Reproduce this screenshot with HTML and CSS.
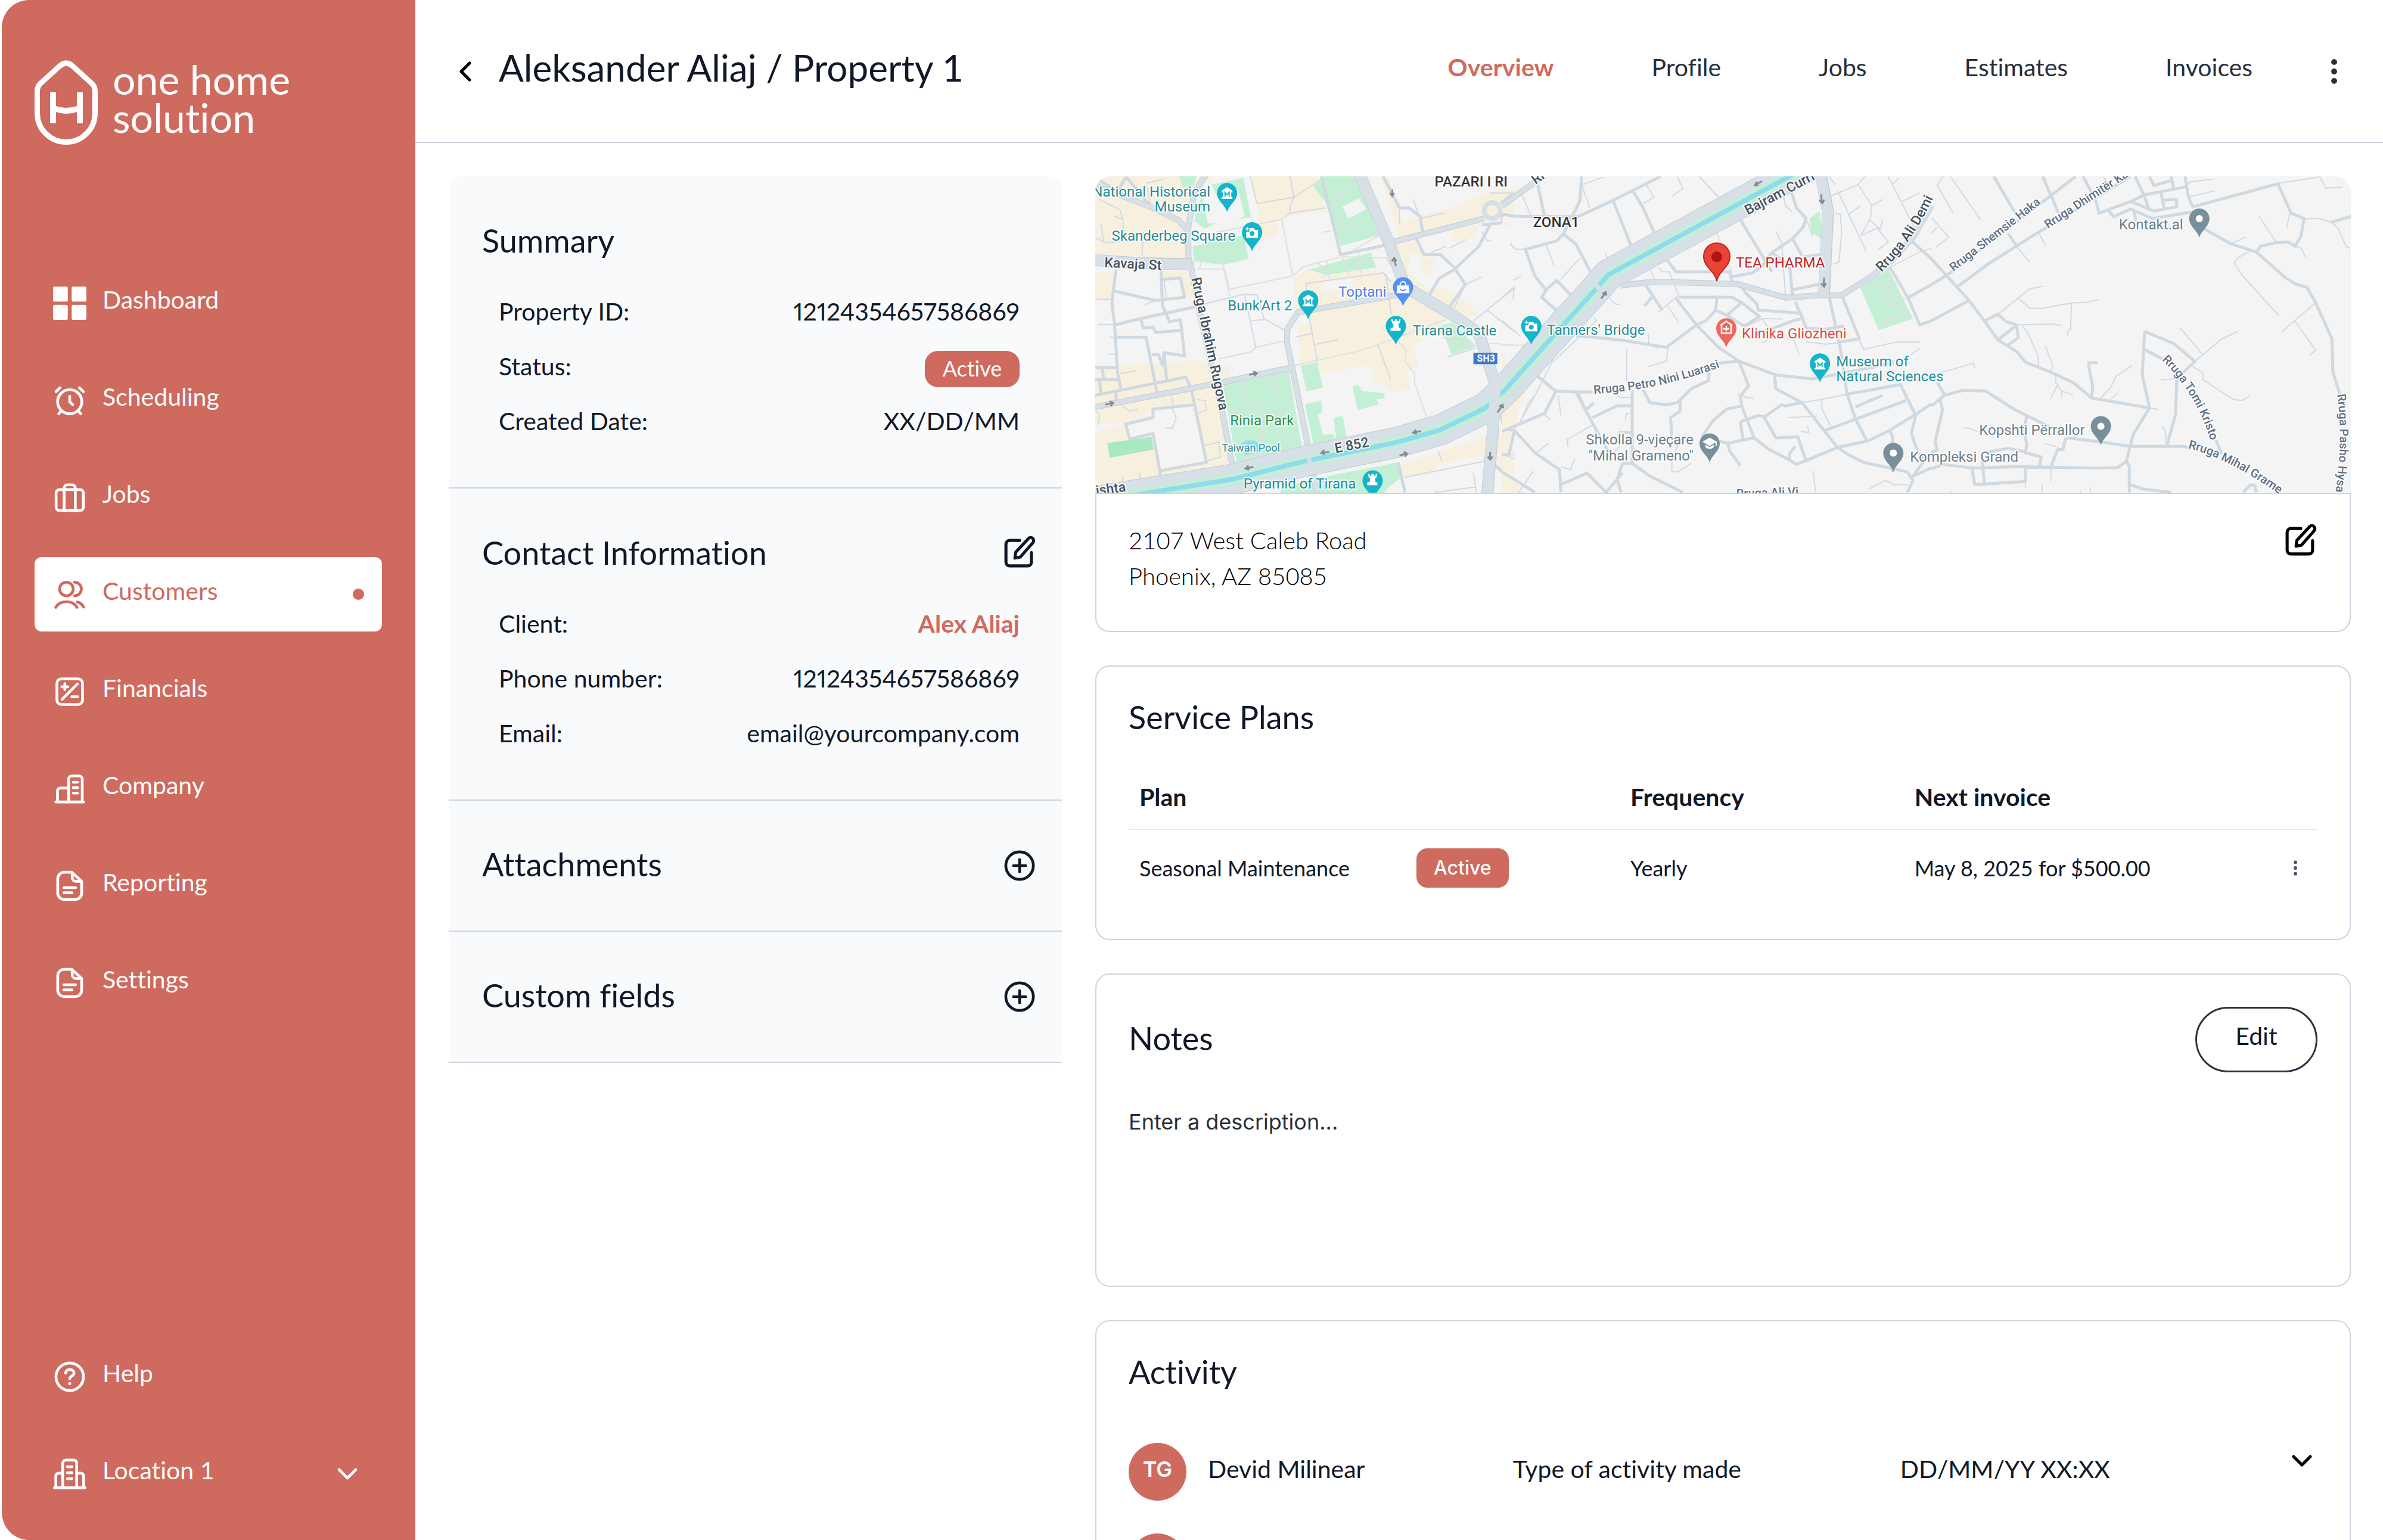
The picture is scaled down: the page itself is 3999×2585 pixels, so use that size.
FILE: index.html
```html
<!DOCTYPE html>
<html lang="en">
<head>
<meta charset="utf-8">
<title>Aleksander Aliaj / Property 1</title>
<link rel="stylesheet" href="styles.css">
</head>
<body>
<svg class="defs" aria-hidden="true">
  <symbol id="i-doc" viewBox="0 0 24 24"><path d="M13.5 2.2H8a4.600 4.600 0 0 0-4.600 4.600v10.400A4.600 4.600 0 0 0 8 21.800h8a4.600 4.600 0 0 0 4.600-4.600V8.800zM13.800 2.500v3.600a2.600 2.600 0 0 0 2.600 2.600h4M7.800 13.300h8.400M7.800 17h5.800"/></symbol>
  <symbol id="i-edit" viewBox="0 0 24 24"><path d="M12 3.500H4.800A2.600 2.600 0 0 0 2.200 6.100v13.100a2.600 2.600 0 0 0 2.600 2.600h13.100a2.600 2.600 0 0 0 2.600-2.600v-7M18.300 2.200a2.100 2.100 0 0 1 3.300 2.900L12.600 15.400l-4 .8.600-4.200z"/></symbol>
  <symbol id="i-plus" viewBox="0 0 24 24"><circle cx="12" cy="12" r="9.900"/><path d="M12 7.600v8.800M7.600 12h8.800"/></symbol>
  <symbol id="i-down" viewBox="0 0 24 24"><path d="M6 9l6 6 6-6"/></symbol>
  <symbol id="i-dots" viewBox="0 0 24 24"><circle cx="12" cy="5.200" r="2.100"/><circle cx="12" cy="12" r="2.100"/><circle cx="12" cy="18.800" r="2.100"/></symbol>
  <symbol id="m-pin" viewBox="-20 -20 40 54"><path d="M0 32C-3 20-17 13-17 0a17 17 0 0 1 34 0C17 13 3 20 0 32z"/></symbol>
  <symbol id="m-museum" viewBox="-20 -20 40 54"><path fill="#fff" d="M0-10l9 6v3H7V7h2v3H-9V7h2V-1h-2v-3z"/><path fill="none" stroke="#12b5cb" stroke-width="2" d="M-3.500 6V-1L0 3l3.500-4v7"/></symbol>
  <symbol id="m-camera" viewBox="-20 -20 40 54"><path fill="#fff" d="M-4-7h7l2 3h5V9H-10V-1h5z"/><path stroke="#fff" stroke-width="1.500" d="M-8-9v6M-11-6h6"/><circle cx="0" cy="2" r="4" fill="#12b5cb"/></symbol>
  <symbol id="m-castle" viewBox="-20 -20 40 54"><path fill="#fff" d="M-8-11h3v3h3v-3h4v3h3v-3h3l-2 7h-2l1 7h3v5H-9V3h4l1-7h-2z"/></symbol>
</svg>

<div class="app">
  <aside class="sidebar">
    <div class="brand">
      <svg class="brand-mark" viewBox="0 0 106 142" aria-hidden="true">
        <path fill="none" stroke="#fff" stroke-width="9" d="M42 10Q53 0 64 10L96 39Q101.500 44 101.500 52V89A48.500 48.500 0 0 1 4.500 89V52Q4.500 44 10 39Z"/>
        <path fill="#fff" d="M26 54h10v23q17 6 35 0V54h10v52H71V87q-18 6-35 0v19H26z"/>
      </svg>
      <div class="brand-name">one home<br>solution</div>
    </div>
    <nav class="menu">
      <a class="menu-item" href="#"><svg class="icon solid" viewBox="0 0 24 24"><rect x="0" y="0" width="10.600" height="10.800" rx="1.200"/><rect x="13.400" y="0" width="10.600" height="10.800" rx="1.200"/><rect x="0" y="13.200" width="10.600" height="10.800" rx="1.200"/><rect x="13.400" y="13.200" width="10.600" height="10.800" rx="1.200"/></svg><span>Dashboard</span></a>
      <a class="menu-item" href="#"><svg class="icon" viewBox="0 0 24 24"><circle cx="12" cy="13" r="8.700"/><path d="M12 9v4l2.200 2.200M5.800 19.600l-1.700 2M18.200 19.600l1.700 2M2.200 5.700L5 3M21.800 5.700L19 3"/></svg><span>Scheduling</span></a>
      <a class="menu-item" href="#"><svg class="icon" viewBox="0 0 24 24"><rect x="2.200" y="6.400" width="19.600" height="15" rx="2.400"/><path d="M8 21.400V5.300a2.400 2.400 0 0 1 2.400-2.400h3.200A2.400 2.400 0 0 1 16 5.300v16.100"/></svg><span>Jobs</span></a>
      <a class="menu-item current" href="#" aria-current="page"><svg class="icon" viewBox="0 0 24 24"><circle cx="9.600" cy="8" r="4.900"/><path d="M15.500 3.100a4.900 4.900 0 0 1 0 9.800M2 21.200c3-5.400 12.200-5.400 15.200 0M17.500 17.400c2 .5 3.500 1.700 4.500 3.600"/></svg><span>Customers</span><i class="marker"></i></a>
      <a class="menu-item" href="#"><svg class="icon" viewBox="0 0 24 24"><rect x="2.800" y="2.800" width="18.400" height="18.400" rx="3.200"/><path d="M6.500 17.500l11-11M8.500 6.300v4.400M6.300 8.500h4.400M13.500 15.700h4.200"/></svg><span>Financials</span></a>
      <a class="menu-item" href="#"><svg class="icon" viewBox="0 0 24 24"><path d="M2 21.500h20M3.200 21.500v-8a2 2 0 0 1 2-2h6M11.200 21.500V5a2.200 2.200 0 0 1 2.200-2.200h5.400A2.200 2.200 0 0 1 21 5v16.500M14.500 7.300h3.200M14.500 11.200h3.200M14.500 15.100h3.200"/></svg><span>Company</span></a>
      <a class="menu-item" href="#"><svg class="icon"><use href="#i-doc"/></svg><span>Reporting</span></a>
      <a class="menu-item" href="#"><svg class="icon"><use href="#i-doc"/></svg><span>Settings</span></a>
    </nav>
    <div class="menu">
      <a class="menu-item" href="#"><svg class="icon" viewBox="0 0 24 24"><circle cx="12" cy="12" r="9.900"/><path d="M9 9.300C9.400 7.400 10.600 6.800 12 6.800c1.800 0 3.100 1 3.100 2.500 0 2.200-3.100 2-3.100 4.200M12 16.700v.3"/></svg><span>Help</span></a>
      <button class="menu-item" type="button"><svg class="icon" viewBox="0 0 24 24"><path d="M1 22h22M2 22v-8.500a2 2 0 0 1 2-2h3M7 22V4.300a2.200 2.200 0 0 1 2.200-2.200h5.600A2.200 2.200 0 0 1 17 4.300V22M17 11.500h3a2 2 0 0 1 2 2V22M10.400 6.900h3.200M10.400 11.200h3.200M10.400 15.500h3.200"/></svg><span>Location 1</span><svg class="icon"><use href="#i-down"/></svg></button>
    </div>
  </aside>

  <div class="page">
    <header class="topbar">
      <button class="icon-button black" type="button" aria-label="Back"><svg class="icon thick" viewBox="0 0 24 24"><path d="M15 6l-6 6 6 6"/></svg></button>
      <h1>Aleksander Aliaj / Property 1</h1>
      <nav class="tabs">
        <a class="active" href="#">Overview</a>
        <a href="#">Profile</a>
        <a href="#">Jobs</a>
        <a href="#">Estimates</a>
        <a href="#">Invoices</a>
      </nav>
      <button class="icon-button slate" type="button" aria-label="More"><svg class="icon solid"><use href="#i-dots"/></svg></button>
    </header>

    <main class="content">
      <div class="details">
        <section class="group">
          <div class="group-head"><h2>Summary</h2></div>
          <dl class="facts">
            <div><dt>Property ID:</dt><dd>12124354657586869</dd></div>
            <div><dt>Status:</dt><dd class="badge">Active</dd></div>
            <div><dt>Created Date:</dt><dd>XX/DD/MM</dd></div>
          </dl>
        </section>
        <section class="group">
          <div class="group-head"><h2>Contact Information</h2><button class="icon-button" type="button" aria-label="Edit contact"><svg class="icon thick"><use href="#i-edit"/></svg></button></div>
          <dl class="facts">
            <div><dt>Client:</dt><dd><a href="#">Alex Aliaj</a></dd></div>
            <div><dt>Phone number:</dt><dd>12124354657586869</dd></div>
            <div><dt>Email:</dt><dd>email@yourcompany.com</dd></div>
          </dl>
        </section>
        <section class="group compact"><h2>Attachments</h2><button class="icon-button" type="button" aria-label="Add attachment"><svg class="icon"><use href="#i-plus"/></svg></button></section>
        <section class="group compact"><h2>Custom fields</h2><button class="icon-button" type="button" aria-label="Add custom field"><svg class="icon"><use href="#i-plus"/></svg></button></section>
      </div>

      <div class="cards">
        <section class="place">
          <svg class="map" viewBox="0 0 2105 530" preserveAspectRatio="xMidYMid slice" role="img" aria-label="Map">
            <rect width="2105" height="530" fill="#f4f4f4"/>
            <!-- built-up blocks and parks, west -->
            <g transform="matrix(.4592 0 0 .3571 -18 -15)">
              <path class="block" d="M39 42H480L420 110 380 240 370 430 39 405zM605 42H850L870 170 880 210 750 225 720 245 640 265zM39 490H110L100 620H39zM280 490H385L400 610 280 600zM200 925L400 905 530 935V1000L500 1010 39 1115V940zM39 1120L500 1020 545 1400 270 1470 39 1526V1250L160 1200 39 1200zM760 520L830 470 1070 480 1160 560 1250 620 1340 680 1300 730 1200 850 1220 930 1180 960 1190 1045 1120 1055 1060 1000 1040 925 870 970 850 910 790 930 780 760 830 720 775 670zM1080 42L1110 50 1160 260 1240 220 1340 190 1460 120 1568 100V210L1230 320 1150 340zM1110 365L1215 340 1250 430 1190 400 1180 490 1240 560 1180 560zM640 260L700 240 705 320 650 335zM1340 295L1440 270 1420 330 1340 350zM1240 420L1275 430 1270 510 1225 490zM1150 1400L1470 1260 1460 1350 1290 1400 1270 1440 1160 1460zM1500 1250L1568 1290V1480L1500 1400zM1568 860L1610 1050 1580 1150 1540 1200zM1230 570L1300 560 1400 640 1440 690 1400 700z"/>
              <path class="ground" d="M250 1140L390 1120 440 1380 275 1415 250 1250 160 1270 150 1210zM290 530H350V600L290 620zM870 545L980 520V560L870 580zM1110 100L1230 42H1400V150L1240 220 1180 190z"/>
              <path class="park" d="M345 42H410L400 80 365 110zM465 80L580 50 608 235 558 245 585 228 560 100 480 130zM430 140L450 262 480 262 440 288 402 255 410 180zM395 370L580 318 600 430 505 458 400 440zM865 42H985L1075 320 935 370 880 165 835 90zM820 480L1045 400 1065 470 880 505zM505 1020L745 950 795 1325 555 1385zM790 930L850 915 870 1035 810 1052zM978 1028L1000 1020 1015 1050 1095 1060V1085L1065 1090 1075 1112 998 1140zM805 1112L865 1095 868 1150 852 1160 870 1255 910 1252 917 1290 838 1315zM910 1175L943 1165 958 1278 920 1288zM1300 740L1345 730 1430 840 1340 880zM890 1450L1145 1385 1160 1450 1105 1510 1080 1550H710L720 1500z"/>
              <path class="ground" d="M942 185L1000 145 1030 195 962 240z"/>
              <path fill="#a8e9c2" d="M83 1295L245 1265 252 1325 92 1364z"/>
              <path fill="#90daee" d="M568 1300L590 1283H620L640 1300 650 1340 625 1338 590 1350 575 1330z"/>
              <path class="trail" d="M480 305L720 245 750 215M720 245L760 510 530 572 510 478H410M420 475L440 380 480 305 530 605M760 510L800 465 940 420 1100 425 1140 500M870 90L935 130 985 60M935 130L890 190M905 250L1075 320 980 390M850 450L885 480 870 520M885 440L890 520M940 420L960 465 965 510M1000 400L1003 435 1060 455M960 465L1000 455 1010 500M490 900L610 865 625 845 730 815M765 930L1010 860 1320 715M1140 810L1175 860 1170 910 1205 970V1010L1255 1195M575 1000L595 1090 650 1180 785 1320M505 1025L665 1130M675 965L690 1030 750 1090 745 950M690 1030L720 955M595 1090L570 1160M650 1180V1300M660 1170L755 1140M560 1310L580 1360 660 1345M1480 825L1568 835M1290 740L1310 800 1420 840M1320 750L1360 850M1350 750L1410 835M1310 780L1360 755"/>
              <path class="lane" d="M39 330L80 355 150 345M60 265L70 355M215 300L210 415M110 230L140 245 145 320 180 325M55 150L130 200 140 245M230 90L240 180M225 75L290 55M750 42L765 140 630 170 605 42M750 185L765 140 855 65M750 185V215L880 190M875 305L900 297M1200 150L1225 240 1310 215M1150 190V265M1330 380L1390 340M1265 400L1320 370M1240 415L1300 410M810 610V545L1090 495 1120 540M1100 500L1120 690M440 640L585 595 630 600 655 710 730 765M585 600L625 845M610 720L655 715M820 700L850 910M770 797L830 780M840 832L925 810M1070 830L1118 997M1325 890L1425 850M1350 660L1390 550 1450 515M1420 720L1568 570M1470 670L1568 770M39 620H100M50 738H110M90 798H120M85 878H120M130 968L190 955M130 1110L160 1143 195 1138M320 1080L325 1130M39 1140L55 1160 50 1210M295 1225H320L335 1180 320 1130M410 1090L440 1095 445 1140 415 1155M440 1305L490 1290 497 1360 445 1380M200 1430L210 1510M80 1475L90 1526M140 1450V1500M1170 1455L1460 1380M1290 1330L1305 1380M1420 1435L1430 1526M1280 1526L1430 1500M1530 1220L1568 1240M1500 1400L1568 1460M1530 1340L1568 1350M1480 120H1568M1450 300L1470 345H1485M1555 355L1568 380M290 530L300 625M220 645L260 625"/>
              <path class="street" d="M39 50L120 110 150 50M115 480L105 580 100 640 110 740 120 960 135 1050M105 580L260 625 365 610 350 520 285 525M280 480V525L285 650 310 725 350 715 355 765M110 740L205 710 440 645M205 710L215 755 250 750 260 775 355 765 365 885 290 870 285 930 270 880H245M110 798H225L265 1060M290 870L300 1000M39 940H120M65 940L70 1000M39 995L125 998M55 1000L60 1065M39 1070L370 985 390 1040 445 1385 275 1425 250 1250 165 1275 150 1205 250 1175V1135L400 1115M275 1425L278 1470M115 1060V1100M1090 42L1150 190 1185 190 1225 230 1235 310M1210 330L1240 410H1300L1350 470 1390 550 1330 660M1480 270L1440 370 1415 400 1350 480 1295 520 1255 610M1520 170L1568 120M1450 270L1525 260V220L1568 228M1100 365L935 410 865 42M1145 1385L1170 1526M150 42L240 180M1510 1130L1540 1250 1568 1240M1500 1400L1568 1480"/>
              <path class="road-edge" d="M30 80L250 190 345 250 378 300 380 440M378 290L390 200 400 120 450 20M385 440L430 740 500 1130 560 1540M39 1125L500 1010 755 940M1110 355L1460 240M850 1540L830 1400 760 950 740 830V760L780 680 1140 600"/>
              <path class="road" d="M30 80L250 190 345 250 378 300 380 440M378 290L390 200 400 120 450 20M385 440L430 740 500 1130 560 1540M39 1125L500 1010 755 940M1110 355L1460 240M850 1540L830 1400 760 950 740 830V760L780 680 1140 600"/>
              <ellipse class="road" cx="1488" cy="203" rx="29" ry="38"/>
              <path class="avenue-edge" d="M30 435L200 450 390 455M1000 20L1110 350 1170 560 1340 690 1440 780 1500 1020 1490 1250 1470 1540"/>
            </g>
            <!-- streets, centre -->
            <g transform="matrix(.4592 0 0 .3571 682 -15)">
              <path class="block" d="M0 230L35 270 0 275zM0 860L40 1000 60 1140 50 1230 20 1350 0 1350zM0 1360L50 1400 30 1440 80 1526H0z"/>
              <path class="park" d="M1122 240L1160 205 1170 335 1130 310zM1308 565L1410 475 1500 710 1375 765z"/>
              <path class="trail" d="M1360 500L1440 540 1415 590 1440 640M1330 540L1375 560 1400 640 1480 665 1385 735M1375 560L1415 550 1395 600 1480 620M1375 740L1490 690M785 310L840 500M540 480L560 530M1568 380L1520 400 1400 480M0 835H100L150 830"/>
              <path class="lane" d="M70 120L105 225M295 80L370 45M290 80L320 190M525 80L555 140 515 170M640 42L660 100 620 135M720 42L790 140M160 365L190 460M285 425L215 525M30 360L50 385 85 385M0 610L45 560 40 620M70 510L40 530M0 720L65 790M375 400L430 520M380 590L410 640 430 645M335 705L345 720 180 920 125 1060 60 1210M570 470L585 490 610 490 645 600 570 680M605 650L645 730M535 780V830L570 850M455 855V1010M605 850L600 910 535 935M1025 120L1035 180 1060 210M1000 300L1020 350 1035 600M1110 240L1135 325M1225 110L1330 395M1200 135L1300 80 1350 180 1390 150M1300 80L1325 42M1350 180L1345 240 1310 320M1265 220L1310 180M1345 250L1380 290 1390 245M1310 320L1370 285 1410 350 1375 385M1410 42L1520 320M1460 160L1525 120M1425 80L1450 50M1195 42L1215 80M1215 215L1235 220 1240 300 1230 445 1210 455M885 750L950 710 1025 712M950 710L990 790 950 825M1060 790L1085 880M1110 820L1180 830 1230 825M1300 800L1320 855 1440 820H1525M1440 930L1525 850M1350 935L1440 905M1090 1105L1165 1090 1260 1065M1165 1090L1170 1140 1200 1215M1045 1175L1150 1168M120 1070L95 1110 60 1215M155 1160L175 1185M205 1070L215 1165M235 1280L330 1210M240 1280V1310M170 1295L120 1345M265 1370L250 1420 215 1405M10 1350L45 1370M60 1526L115 1425M480 1080H430L410 1060M450 1185L455 1155H480M620 1370L640 1310 670 1250M620 1370V1430H640L690 1390M390 1360L430 1310M1090 1240L1120 1245 1115 1215M1135 1425L1145 1526M1340 1510L1400 1470 1430 1490H1480M860 1060L890 1080 920 1085M1340 1090L1390 1070"/>
              <path class="street" d="M0 220L50 230H280L405 155 580 42M130 80L155 230M0 175L130 60 150 42M290 42L285 155 225 310 200 345 85 385 120 510 160 575 200 530 255 605M160 575L145 610 210 685M225 315L270 360 330 510M405 155L475 380M475 105L515 190 560 320M600 430L635 490H830L840 540M835 515L915 495 950 465 985 400 1060 335 1100 280 1110 240 1075 190 1055 110M870 245L985 490M985 400L1050 460 1060 600M1060 335L1095 415M1100 420L1170 408M1060 575L1160 548M525 555L585 670M550 605L520 650M645 610H840L875 635 940 700 885 745 820 695 780 670 785 600M875 635L820 695M780 670L745 720 710 740 600 845 430 810 270 790M635 615L710 740 790 845 865 910 790 920M875 560L890 590 930 640 935 670 1090 685 1110 755M1070 630L1090 690M1090 715L1075 715 960 770M1110 755L1180 760 1250 745M1195 610L1235 850 1260 1065 1290 1180 1330 1280M865 910L1000 975 1135 993 1430 920M1235 820L1305 805 1240 600M995 980L1000 1040 1095 1105 1225 1315 1265 1350 1320 1385 1480 1430 1500 1470 1480 1526M865 910L900 1025 870 1075 875 1120 920 1270 975 1325 1045 1370 1075 1395 1225 1315 1335 1285 1415 1235 1510 1160 1568 1110M875 1120L820 1135 770 1190 730 1265M870 1195L935 1165 960 1170 1020 1115 1035 1120 1090 1105M870 1195L880 1280M955 1170L1000 1270 1080 1265 1110 1380M1070 1310L1050 1345 1048 1380M730 1270L825 1295 920 1270M825 1295L830 1330 870 1400M1415 1235L1425 1260V1430M1180 1235L1475 1095M1260 1065L1455 1020 1510 1165 1495 1250 1510 1310 1540 1380 1500 1450 1568 1410M1290 1125L1390 1070M1490 1000L1568 990M1410 460L1440 520 1485 620 1525 740 1568 720M1485 610L1568 550M1490 340L1568 430M125 975L195 1050 270 1055 330 1200 390 1340M195 1055L155 1155 0 1240M20 1230L45 1235 25 1350 0 1350M45 1235L120 1340 210 1420 215 1526M0 1430L120 1526M215 1490L310 1435 380 1526 440 1435M475 1045V1390H440L420 1465 435 1526M270 1055H330M275 1055L305 1140 335 1105M330 1175L420 1120H475M425 1245H475M475 1390L540 1450 660 1526M515 1045L540 1105 600 1115 640 1105 690 1040 755 1000V940M650 1100V1145L615 1175 620 1260"/>
              <path class="road-edge" d="M430 555L530 540H640L860 548 1035 612 1160 600H1240L1340 520 1420 440 1500 330 1568 180M0 180L140 50"/>
              <path class="road" d="M430 555L530 540H640L860 548 1035 612 1160 600H1240L1340 520 1420 440 1500 330 1568 180M0 180L140 50"/>
              <path class="avenue-edge" d="M1162 20L1190 210 1175 610"/>
            </g>
            <!-- river and embankment roads -->
            <path class="bank-edge" d="M0 545L230 508 354 477 506 446 579 425 655 388 690 355 755 282 843 185 860 165 1164 0 1200-20"/>
            <path class="bank" d="M0 545L230 508 354 477 506 446 579 425 655 388 690 355 755 282 843 185 860 165 1164 0 1200-20"/>
            <path class="verge" d="M0 545L230 508 354 477 506 446 579 425 655 388 690 355 755 282 843 185 860 165 1164 0 1200-20"/>
            <path class="river" d="M0 545L230 508 354 477 506 446 579 425 655 388 690 355 755 282 843 185 860 165 1164 0 1200-20"/>
            <path class="avenue" d="M-5 140L74 146 161 148M441-8L492 110 519 185 597 231 643 264 671 349 666 432 657 535M1215-8L1228 60 1221 203"/>
            <path class="road" d="M356 463L364 500M836 180L852 194"/>
            <!-- streets, east -->
            <g transform="matrix(.4841 0 0 .3571 1402 -15)">
              <path class="lane" d="M65 42L170 245M40 42L20 85 75 215M0 235L60 328 15 375M0 310L20 280M370 305L395 365M270 320L300 380 340 445M230 690L340 570 385 558M300 615L340 660 380 663 430 650 485 637 540 633 580 620M485 637L482 755 472 770 470 790M295 740L420 735 450 742M315 745L335 780 370 890V940M395 840L420 935 410 960M430 980V1010L450 1050V1080M437 1020L412 1087M450 1050L490 1068M585 1085L620 1035 640 980 695 930M620 1090L645 1060M30 965L145 920 150 942M110 1225H130L160 1240M390 1295L430 1310M325 1475V1505M383 1490V1526M515 1515V1526M550 1500V1526M68 1520V1526M415 1400L412 1475M800 1215L812 1250 810 1300M755 1130L785 1137M795 998L850 993M905 935L940 965V998L1045 1090 1075 1095 1102 1073M910 912L940 880 1000 810 1060 770M862 755L940 880M1100 395L1060 425 1048 447 1075 505 1202 695M1330 635L1258 720 1215 770M1258 720L1330 858 1307 885M1040 358L1088 327M1135 230L1193 350M1240 220L1230 283M1260 370L1280 380 1297 423M1290 242L1340 240 1385 258 1408 285 1435 370 1450 380M1200 75L1345 45 1365 97 1422 93M885 80L900 67 975 55M890 140L980 110M595 42L605 65"/>
              <path class="street" d="M215 42L295 225M265 310L295 370M385 42L440 215M0 430L50 505 130 625 185 725 230 810 295 865 325 915 410 960 490 1010 555 1083 755 1130 700 1250 688 1310 675 1380 645 1410 580 1412 300 1405 140 1412 40 1395 0 1415M0 550L60 500 500 42M90 560L200 450 370 305 690 42M0 720L130 625M185 720L230 690 260 725 295 740 300 800 265 835M295 740L230 810M525 42L570 160 580 215 690 160 770 205 850 185 848 150 800 155M690 160L735 130 885 90M705 42L735 130 755 200M795 120L805 190M615 205L630 232 690 195 765 240 900 210M700 205L708 250M755 42L770 85 830 62M830 42L838 100M878 42L890 140 905 185 1200 77 1245 215 1290 240 1280 320 1260 370 1235 350 1195 353 1140 370 1125 400M940 285L1035 358 1125 398 1225 517 1260 547 1300 563 1330 635 1387 805 1390 960 1415 1070M1385 258L1453 230M540 918H575M543 925L558 1025 555 1083M738 770L730 975 755 1130M738 770L840 828 912 912 850 990 845 1160 815 1310M738 855L800 900M985 1280L1005 1345M470 1270L590 1290 688 1310H875L900 1320M675 1380L685 1405V1526M688 1490L730 1510 830 1526M0 1120L45 1070 108 1047 187 1050 285 1135 330 1165 410 1220M330 1165L320 1240 330 1300 325 1340 380 1360 375 1400M0 1340L20 1325 12 1290 38 1140 30 1090 45 1065 20 1010M200 1335L265 1320 325 1335M440 1315L415 1400M465 1270L455 1325H440M140 1412L150 1490 325 1475V1410M175 1365L183 1485M1080 1526L1105 1490 1120 1495 1125 1526"/>
            </g>
            <!-- one-way arrows -->
            <g class="arrows">
              <path d="M17 383l12-3m-5-3l6 3-4 5M258 333l12-3m-5-3l6 3-4 5M392 462l-12 2m4-5l-5 5 6 2M265 487l-12 3m4-5l-5 5 6 2M546 427l-12 3m4-5l-5 5 6 2M510 468l12-3m-5-3l6 3-4 5M498 22v10m-4-4l4 5 3-5M504 150l-3-12m-4 5l4-6 4 5M662 462v12m-4-4l4 5 4-5M674 396l9-12m-6 2l6-3 1 6M1118 8l-11 6m2-5l-3 6 6 0M1217 30l1 14m-4-4l5 5 3-6M1222 170l-1 14m-4-4l5 5 3-6M848 205l8-10m-6 2l6-3 1 6"/>
            </g>
            <rect x="634" y="296" width="40" height="19" fill="#3c78c8"/>
            <defs>
              <path id="p-luarasi" d="M836 365L880 361Q960 352 1048 320"/>
              <path id="p-demi" d="M1318 161Q1370 112 1408 30"/>
              <path id="p-tomi" d="M1788 308Q1848 366 1872 450"/>
              <path id="p-mihal" d="M1832 456Q1900 472 1992 538"/>
              <path id="p-pasho" d="M2082 366Q2093 440 2078 540"/>
            </defs>
            <g class="labels">
              <g class="poi end">
                <text x="193" y="34">National Historical</text><text x="193" y="59">Museum</text>
                <text x="235" y="108">Skanderbeg Square</text><text x="330" y="225">Bunk'Art 2</text>
                <text x="437" y="524">Pyramid of Tirana</text><text class="mall" x="488" y="202">Toptani</text>
              </g>
              <g class="poi">
                <text x="532" y="267">Tirana Castle</text><text x="757" y="266">Tanners' Bridge</text>
                <text x="1242" y="319">Museum of</text><text x="1242" y="344">Natural Sciences</text>
                <text class="water" x="212" y="462">Taiwan Pool</text>
                <text class="green" x="226" y="418">Rinia Park</text>
                <text class="target" x="1074" y="153">TEA PHARMA</text><text class="clinic" x="1084" y="272">Klinika Gliozheni</text>
                <text class="grey" x="1366" y="479">Kompleksi Grand</text>
              </g>
              <g class="poi grey end">
                <text x="1003" y="450">Shkolla 9-vjeçare</text><text x="1003" y="477">"Mihal Grameno"</text>
                <text x="1824" y="89">Kontakt.al</text><text x="1659" y="434">Kopshti Përrallor</text>
              </g>
              <g class="area"><text x="569" y="17">PAZARI I RI</text><text x="734" y="85">ZONA1</text></g>
              <g class="way">
                <text transform="translate(15 152) rotate(3)">Kavaja St</text>
                <text transform="translate(161 171) rotate(78)">Rruga Ibrahim Rugova</text>
                <text transform="translate(403 464) rotate(-11)">E 852</text>
                <text transform="translate(2 535) rotate(-8)">ishta</text>
                <text transform="translate(1094 65) rotate(-28)">Bajram Curri</text>
                <text transform="translate(738 14) rotate(-35)">Rr</text>
                <text><textPath href="#p-demi">Rruga Ali Demi</textPath></text>
              </g>
              <g class="way small">
                <text><textPath href="#p-luarasi">Rruga Petro Nini Luarasi</textPath></text>
                <text transform="translate(1075 539) rotate(-2)">Rruga Ali Vi</text>
                <text transform="translate(1439 160) rotate(-38)">Rruga Shemsie Haka</text>
                <text transform="translate(1597 88) rotate(-33)">Rruga Dhimitër Ka</text>
                <text><textPath href="#p-tomi">Rruga Tomi Kristo</textPath></text>
                <text><textPath href="#p-mihal">Rruga Mihal Grame</textPath></text>
                <text><textPath href="#p-pasho">Rruga Pasho Hysa</textPath></text>
              </g>
              <text class="shield" x="640" y="311">SH3</text>
            </g>
            <g class="pins">
              <g fill="#12b5cb">
                <use href="#m-pin" x="201" y="8" width="40" height="54"/><use href="#m-museum" x="201" y="8" width="40" height="54"/>
                <use href="#m-pin" x="243" y="74" width="40" height="54"/><use href="#m-camera" x="243" y="74" width="40" height="54"/>
                <use href="#m-pin" x="337" y="188" width="40" height="54"/><use href="#m-museum" x="337" y="188" width="40" height="54"/>
                <use href="#m-pin" x="484" y="231" width="40" height="54"/><use href="#m-castle" x="484" y="231" width="40" height="54"/>
                <use href="#m-pin" x="445" y="490" width="40" height="54"/><use href="#m-castle" x="445" y="490" width="40" height="54"/>
                <use href="#m-pin" x="711" y="231" width="40" height="54"/><use href="#m-camera" x="711" y="231" width="40" height="54"/>
                <use href="#m-pin" x="1195" y="294" width="40" height="54"/><use href="#m-museum" x="1195" y="294" width="40" height="54"/>
              </g>
              <use href="#m-pin" x="496" y="166" width="40" height="54" fill="#5491f5"/>
              <path fill="#fff" d="M506 183h20l1 13h-22z"/><path fill="none" stroke="#fff" stroke-width="2" d="M511 184c0-10 10-10 10 0"/><path fill="none" stroke="#5491f5" stroke-width="2" d="M511 189q5 5 10 0"/>
              <use href="#m-pin" x="1038" y="235" width="40" height="54" fill="#ee675c"/>
              <path fill="none" stroke="#fff" stroke-width="2.500" d="M1050 249v14h16v-14M1048 250l10-7 10 7M1058 251v9M1053 256h10"/>
              <g fill="#78909c">
                <use href="#m-pin" x="1010" y="428" width="40" height="54"/><use href="#m-pin" x="1318" y="444" width="40" height="54"/>
                <use href="#m-pin" x="1831" y="51" width="40" height="54"/><use href="#m-pin" x="1666" y="399" width="40" height="54"/>
              </g>
              <g fill="#fff"><path d="M1018 445l12-7 12 7v7h-2v-6l-10 6z"/><path d="M1023 450l7 4 7-4v4q-7 6-14 0z"/><circle cx="1338" cy="464" r="6"/><circle cx="1851" cy="71" r="6"/><circle cx="1686" cy="419" r="6"/></g>
              <path fill="#ea4335" stroke="#c5221f" stroke-width="2" d="M1042 176C1039 158 1020 153 1020 134a22 22 0 0 1 44 0C1064 153 1045 158 1042 176z"/><circle cx="1042" cy="135" r="9" fill="#b31412"/>
            </g>
          </svg>
          <div class="address">
            <address>2107 West Caleb Road<br>Phoenix, AZ 85085</address>
            <button class="icon-button black" type="button" aria-label="Edit address"><svg class="icon thick"><use href="#i-edit"/></svg></button>
          </div>
        </section>

        <section class="card">
          <h2>Service Plans</h2>
          <table class="plans">
            <colgroup><col class="c-plan"><col class="c-state"><col class="c-freq"><col><col class="c-more"></colgroup>
            <thead><tr><th colspan="2">Plan</th><th>Frequency</th><th colspan="2">Next invoice</th></tr></thead>
            <tbody><tr><td>Seasonal Maintenance</td><td><span class="badge alt">Active</span></td><td>Yearly</td><td>May 8, 2025 for $500.00</td><td><button class="row-more" type="button" aria-label="Plan options"><svg class="icon solid"><use href="#i-dots"/></svg></button></td></tr></tbody>
          </table>
        </section>

        <section class="card">
          <div class="card-head"><h2 id="notes">Notes</h2><button class="pill" type="button">Edit</button></div>
          <textarea class="note" placeholder="Enter a description..." aria-labelledby="notes"></textarea>
        </section>

        <section class="card activity">
          <h2>Activity</h2>
          <ul>
            <li><span class="avatar">TG</span><span>Devid Milinear</span><span>Type of activity made</span><span>DD/MM/YY XX:XX</span><button class="icon-button black" type="button" aria-label="Expand"><svg class="icon thick"><use href="#i-down"/></svg></button></li>
            <li><span class="avatar"></span></li>
          </ul>
        </section>
      </div>
    </main>
  </div>
</div>
</body>
</html>
```
FILE: styles.css
```css
:root {
  --brand: #cf6a5e;
  --ink: #101828;
  --slate: #262f3a;
  --line: #cdd4df;
  --panel: #f9fafc;
}

* { box-sizing: border-box; }

body {
  margin: 0;
  background: #fff;
  color: var(--ink);
  font-family: Lato, "Open Sans", sans-serif;
  font-size: 41px;
  line-height: 48px;
  font-variant-ligatures: none;
}

h1, h2, dl, dd, ul { margin: 0; padding: 0; font-weight: 400; }
a { color: inherit; text-decoration: none; }
button { font: inherit; color: inherit; background: none; border: 0; padding: 0; cursor: pointer; }
.defs { position: absolute; width: 0; height: 0; }

.icon {
  display: block;
  flex: none;
  width: 56px;
  height: 56px;
  fill: none;
  stroke: currentColor;
  stroke-width: 2;
  stroke-linecap: round;
  stroke-linejoin: round;
}
.icon.solid { fill: currentColor; stroke: none; }
.icon.thick { stroke-width: 2.2; }
.icon-button { flex: none; display: flex; align-items: center; height: 60px; }
.icon-button.black { color: #000; }
.icon-button.slate { color: var(--slate); }

.app { display: flex; height: 100vh; overflow: hidden; }

/* Sidebar */
.sidebar {
  flex: none;
  display: flex;
  flex-direction: column;
  width: 694px;
  margin-left: 3px;
  padding: 101px 56px 49px 55px;
  border-radius: 46px 0 0 46px;
  background: var(--brand);
  color: #fff;
}
.brand { display: flex; gap: 25px; margin-bottom: 203px; }
.brand-mark { width: 106px; height: 142px; }
.brand-name { font-size: 68px; line-height: 64px; }
.menu { display: flex; flex-direction: column; gap: 38px; }
.menu:last-child { margin-top: auto; }
.menu-item {
  display: flex;
  align-items: center;
  gap: 27px;
  height: 125px;
  padding: 0 30px 0 31px;
  border-radius: 12px;
  text-align: left;
}
.menu-item span { flex: 1; padding-bottom: 12px; }
.menu-item.current { background: #fff; color: var(--brand); }
.marker { width: 19px; height: 19px; border-radius: 50%; background: currentColor; }

/* Header */
.page { flex: 1; min-width: 0; display: flex; flex-direction: column; }
.topbar {
  flex: none;
  display: flex;
  align-items: center;
  height: 240px;
  padding: 2px 54px 0 56px;
  border-bottom: 2px solid var(--line);
}
h1 { flex: 1; margin-left: 28px; padding-bottom: 14px; font-size: 62px; line-height: 72px; }
.tabs { display: flex; gap: 164px; margin-right: 109px; padding-bottom: 14px; color: var(--slate); }
.tabs .active { color: var(--brand); font-weight: 700; }

/* Content */
.content {
  flex: 1;
  min-height: 0;
  display: grid;
  grid-template-columns: 1029fr 2107fr;
  align-items: start;
  gap: 56px;
  padding: 56px 54px 0 56px;
  overflow-y: auto;
  scrollbar-width: none;
}
h2 { padding: 2px 0 6px; font-size: 54px; line-height: 58px; }

.details { border-radius: 22px; background: var(--panel); }
.group { padding: 77px 43px 65px 56px; border-bottom: 2px solid var(--line); }
.group-head { display: flex; justify-content: space-between; height: 66px; margin-bottom: 38px; }
.group.compact { display: flex; align-items: center; justify-content: space-between; height: 220px; padding-top: 0; padding-bottom: 0; }
.facts { padding: 0 28px; }
.facts div { display: flex; align-items: center; justify-content: space-between; height: 92px; }
.facts dd { font-variant-numeric: proportional-nums; }
.facts a { color: var(--brand); font-weight: 700; }
.facts .badge { margin-top: 8px; }
.badge {
  display: inline-flex;
  align-items: center;
  justify-content: center;
  width: 159px;
  height: 61px;
  padding-bottom: 2px;
  border-radius: 22px;
  background: var(--brand);
  color: #fff;
  font-size: 36px;
}
.badge.alt { width: 155px; height: 66px; padding: 0; border-radius: 18px; font-family: Inter, sans-serif; font-size: 32px; font-weight: 500; vertical-align: middle; }

.cards { display: flex; flex-direction: column; gap: 56px; min-width: 0; }
.map { display: block; width: 100%; border-radius: 26px 26px 0 0; }
.address {
  display: flex;
  justify-content: space-between;
  padding: 48px 54px 62px;
  border: 2px solid var(--line);
  border-radius: 0 0 24px 24px;
}
address { color: #000; font-size: 40px; font-style: normal; font-weight: 300; line-height: 60px; }

.card { padding: 54px; border: 2px solid var(--line); border-radius: 24px; }
.plans { width: 100%; margin-top: 47px; border-collapse: collapse; table-layout: fixed; text-align: left; font-size: 36px; }
.plans th { height: 106px; padding: 0 18px; border-bottom: 2px solid #e5e8ec; font-size: 41px; font-weight: 700; }
.plans td { height: 130px; padding: 0 18px; }
.plans td:last-child { padding-left: 0; }
.c-plan { width: 23.3%; }
.c-state { width: 18%; }
.c-freq { width: 23.9%; }
.c-more { width: 56px; }
.row-more { display: flex; justify-content: center; width: 38px; color: #475467; }
.row-more .icon { width: 34px; height: 34px; }

.card-head { display: flex; align-items: center; justify-content: space-between; }
.pill { width: 205px; height: 110px; padding-bottom: 12px; border: 3px solid #2b3340; border-radius: 55px; }
.note {
  display: block;
  width: 100%;
  height: 248px;
  margin-top: 56px;
  padding: 0;
  border: 0;
  outline: 0;
  resize: none;
  background: none;
  font: 36px/54px Inter, sans-serif;
}
.note::placeholder { color: var(--slate); opacity: 1; }

.activity ul { margin-top: 84px; list-style: none; }
.activity li {
  display: grid;
  grid-template-columns: 97px 474fr 612fr 608fr 54px;
  align-items: center;
  gap: 36px;
  height: 97px;
  margin-bottom: 55px;
}
.activity li span { padding-bottom: 8px; }
.activity .icon-button { align-self: start; }
.avatar {
  display: flex;
  align-items: center;
  justify-content: center;
  width: 97px;
  height: 97px;
  border-radius: 50%;
  background: var(--brand);
  color: #fff;
  font: 600 36px/48px Inter, sans-serif;
}

/* Map */
.map path, .map ellipse { vector-effect: non-scaling-stroke; }
.map text { font-family: Roboto, sans-serif; paint-order: stroke; stroke: #fff; stroke-opacity: .8; stroke-width: 4px; stroke-linejoin: round; }
.block { fill: #f8f0df; }
.ground { fill: #f4f4f4; }
.park { fill: #c3f0d5; }
.trail, .lane, .street, .road, .road-edge, .avenue, .avenue-edge, .bank, .bank-edge, .verge, .river { fill: none; stroke-linejoin: round; }
.trail { stroke: #dfdfe1; stroke-width: 2px; }
.lane { stroke: #d0dae5; stroke-width: 2px; }
.street { stroke: #cfd9e1; stroke-width: 5px; }
.road { stroke: #d7dfe7; stroke-width: 8px; }
.road-edge { stroke: #c2ccd5; stroke-width: 10px; }
.avenue { stroke: #d7dfe7; stroke-width: 18px; }
.avenue-edge { stroke: #c2ccd5; stroke-width: 20px; }
.bank { stroke: #d7dfe7; stroke-width: 50px; }
.bank-edge { stroke: #c2ccd5; stroke-width: 52px; }
.verge { stroke: #c3f0d5; stroke-width: 19px; }
.river { stroke: #90daee; stroke-width: 8px; }
.arrows path { fill: none; stroke: #868b90; stroke-width: 3px; }
.poi { fill: #1f8f98; font-size: 24px; }
.end { text-anchor: end; }
.mall { fill: #4a80e8; }
.green { fill: #2f8f4e; }
.water { font-size: 18px; }
.target { fill: #c5221f; }
.clinic { fill: #e0483f; }
.grey { fill: #6a7f8b; }
.area { fill: #333; font-size: 24px; font-weight: 500; }
.way { fill: #44525f; font-size: 23px; font-weight: 500; }
.way.small { fill: #5f6f84; font-size: 20px; }
.map .shield { fill: #fff; stroke: none; font-size: 16px; font-weight: 700; }
```
